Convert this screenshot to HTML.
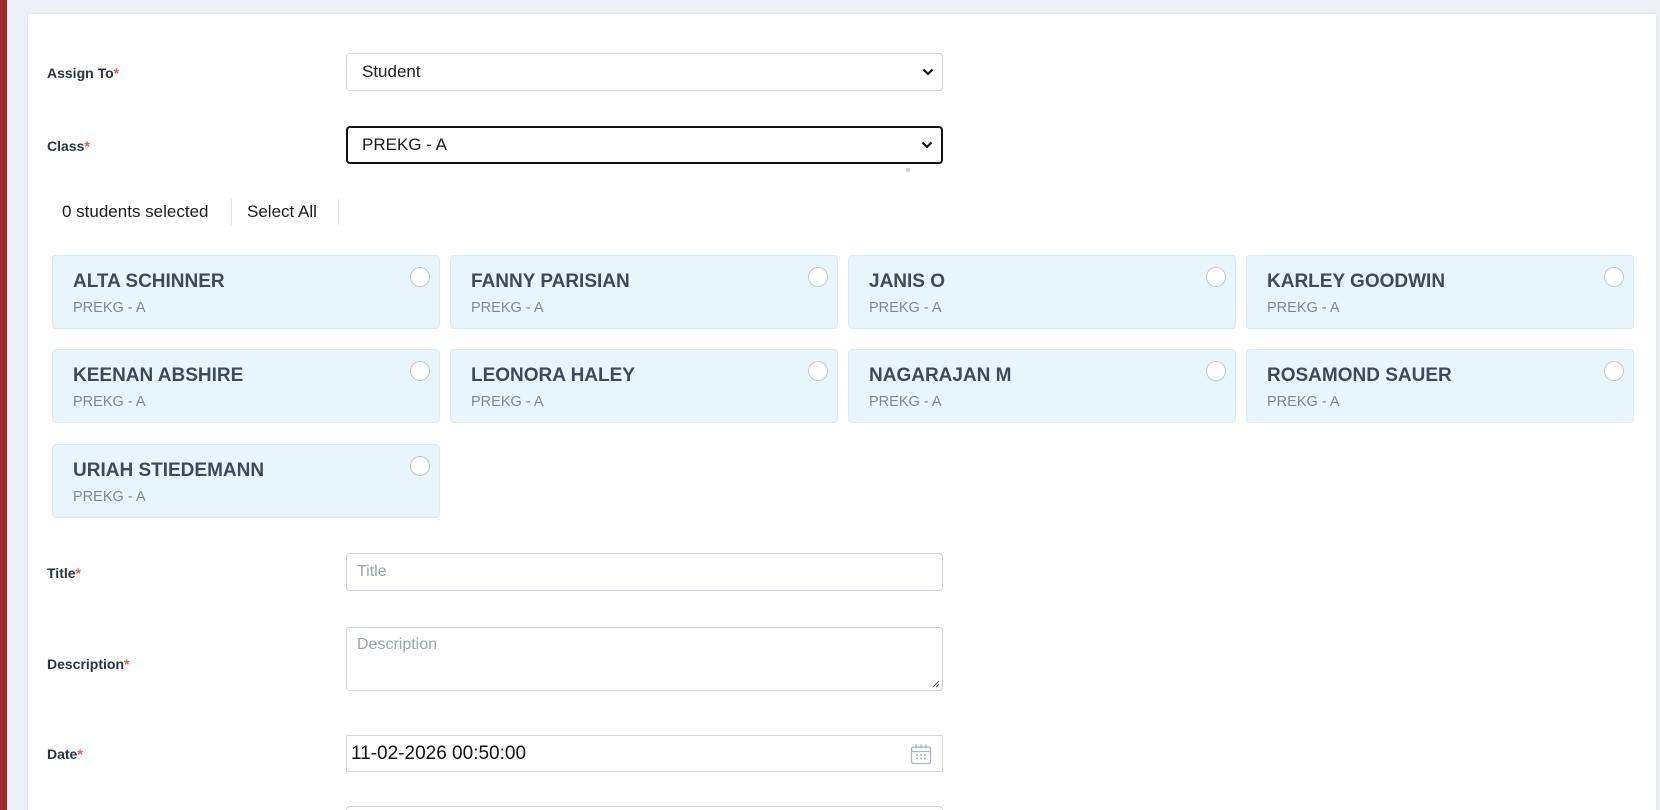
<!DOCTYPE html>
<html style="width:1660px;height:810px;overflow:hidden"><head><meta charset="utf-8"><style>
*{box-sizing:border-box;margin:0;padding:0}
body{width:1660px;height:810px;overflow:hidden;background:#eaf0f5;font-family:"Liberation Sans",sans-serif;position:relative}
.red{position:absolute;left:0;top:0;width:7px;height:810px;background:#a3282c}
.card{position:absolute;left:27px;top:13px;width:1630px;height:797px;background:#fff;border:1px solid #e3e8ee;border-bottom:none;border-radius:3px 3px 0 0}
.lbl{position:absolute;left:47px;font-size:14px;font-weight:bold;color:#2c3440;transform:translateY(-50%)}
.lbl i{color:#e5534b;font-style:normal}
.inp{position:absolute;left:346px;width:597px;border:1px solid #cdd6e2;border-radius:4px;background:#fff;font-size:17px;color:#1c1c1c;padding-left:15px;display:flex;align-items:center}
.ph{color:#9aa4b2;font-size:16px;padding-left:10px}
.chev{position:absolute;right:8px;top:50%;margin-top:-5px}
.st{position:absolute;font-size:17px;color:#1c1c1c;top:212px;transform:translateY(-50%)}
.sc{position:absolute;width:388px;height:74px;background:#e8f5fd;border:1px solid #dcecf7;border-radius:4px}
.sc b{position:absolute;left:20px;top:15px;font-size:19px;color:#3d4a5c}
.sc span{position:absolute;left:20px;top:44px;font-size:14.5px;color:#808896}
.sc em{position:absolute;right:9px;top:11px;width:20px;height:20px;border-radius:50%;border:1px solid #c4c9cf;background:#fff}
</style></head><body>
<div class="red"></div>
<div class="card"></div>
<div class="lbl" style="top:73px">Assign To<i>*</i></div>
<div class="inp" style="top:53px;height:38px">Student<svg class="chev" width="12" height="10" viewBox="0 0 12 10"><path d="M1.5 2.5 6 7 10.5 2.5" stroke="#111" stroke-width="2.2" fill="none"/></svg></div>
<div class="lbl" style="top:146px">Class<i>*</i></div>
<div class="inp" style="top:126px;height:38px;border:2px solid #111;padding-left:14px">PREKG - A<svg class="chev" width="12" height="10" viewBox="0 0 12 10"><path d="M1.5 2.5 6 7 10.5 2.5" stroke="#111" stroke-width="2.2" fill="none"/></svg></div>
<div style="position:absolute;left:906px;top:168px;width:4px;height:4px;border-radius:50%;background:#ccc"></div>
<div class="st" style="left:62px">0 students selected</div>
<div style="position:absolute;left:231px;top:199px;width:1px;height:26px;background:#e2e6ea"></div>
<div class="st" style="left:247px">Select All</div>
<div style="position:absolute;left:338px;top:199px;width:1px;height:26px;background:#e2e6ea"></div>

<div class="sc" style="left:52px;top:255px"><b>ALTA SCHINNER</b><span>PREKG - A</span><em></em></div>
<div class="sc" style="left:450px;top:255px"><b>FANNY PARISIAN</b><span>PREKG - A</span><em></em></div>
<div class="sc" style="left:848px;top:255px"><b>JANIS O</b><span>PREKG - A</span><em></em></div>
<div class="sc" style="left:1246px;top:255px"><b>KARLEY GOODWIN</b><span>PREKG - A</span><em></em></div>
<div class="sc" style="left:52px;top:349px"><b>KEENAN ABSHIRE</b><span>PREKG - A</span><em></em></div>
<div class="sc" style="left:450px;top:349px"><b>LEONORA HALEY</b><span>PREKG - A</span><em></em></div>
<div class="sc" style="left:848px;top:349px"><b>NAGARAJAN M</b><span>PREKG - A</span><em></em></div>
<div class="sc" style="left:1246px;top:349px"><b>ROSAMOND SAUER</b><span>PREKG - A</span><em></em></div>
<div class="sc" style="left:52px;top:444px"><b>URIAH STIEDEMANN</b><span>PREKG - A</span><em></em></div>

<div class="lbl" style="top:573px">Title<i>*</i></div>
<div class="inp" style="top:553px;height:38px;padding-left:0"><span class="ph">Title</span></div>
<div class="lbl" style="top:664px">Description<i>*</i></div>
<div class="inp" style="top:627px;height:64px;padding-left:0;align-items:flex-start;padding-top:8px"><span class="ph">Description</span>
<svg style="position:absolute;right:2px;bottom:2px" width="8" height="8" viewBox="0 0 8 8"><path d="M7 1 1 7M7 4 4 7" stroke="#555" stroke-width="1"/></svg></div>
<div class="lbl" style="top:754px">Date<i>*</i></div>
<div class="inp" style="top:735px;height:37px;border-radius:0;border-color:#d9d9d9;padding-left:4px;font-size:19px;color:#111">11-02-2026 00:50:00
<svg style="position:absolute;right:10px;top:7px" width="22" height="22" viewBox="0 0 22 22" fill="none" stroke="#aab4c4" stroke-width="1.3"><rect x="1.5" y="4" width="19" height="16.5" rx="2"/><path d="M1.5 8.5h19M6 1.5v4M11 1.5v4M16 1.5v4"/><path d="M6 12h2M10 12h2M14 12h2M6 15.5h2M10 15.5h2M14 15.5h2" stroke-width="1.5"/></svg></div>
<div class="inp" style="top:806px;height:4px;border-bottom:none;border-radius:4px 4px 0 0"></div>
</body></html>
